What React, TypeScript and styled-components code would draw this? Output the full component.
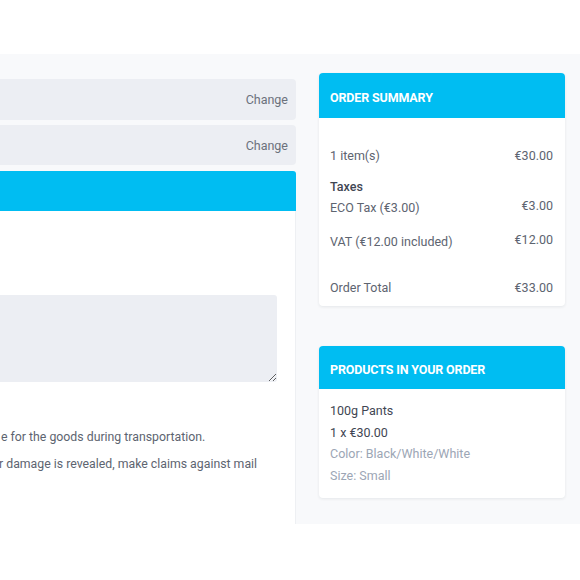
import React from "react";
import styled, { createGlobalStyle } from "styled-components";

const Global = createGlobalStyle`
  html, body { margin: 0; padding: 0; background: #ffffff; }
  body { font-family: Roboto, "Liberation Sans", Arial, sans-serif; -webkit-font-smoothing: antialiased; }
  * { box-sizing: border-box; }
`;

const BLUE = "#00bdf2";

const Page = styled.div`
  padding-top: 54px;
  background: #ffffff;
  height: 580px;
`;

const Main = styled.div`
  display: flex;
  height: 470px;
  background: #f8f9fb;
  overflow: hidden;
`;

const LeftCol = styled.div`
  width: 316px;
  margin-left: -20px;
  flex-shrink: 0;
  display: flex;
  flex-direction: column;
  padding-top: 25px;
`;

const DoneStep = styled.div<{ $h: number }>`
  height: ${(p) => p.$h}px;
  background: #eceef3;
  border-radius: 0 4px 4px 0;
  display: flex;
  align-items: center;
  justify-content: flex-end;
  padding-right: 8px;
  margin-bottom: 5px;
`;

const ChangeLink = styled.span`
  font-size: 12.5px;
  color: #6b717c;
`;

const ActiveHeader = styled.div`
  margin-top: 1px;
  height: 40px;
  background: ${BLUE};
  border-radius: 0 3px 0 0;
`;

const ActiveBody = styled.div`
  flex: 1;
  background: #ffffff;
  border-right: 1px solid #eef0f3;
  padding: 84px 18px 0 0;
`;

const Textarea = styled.textarea`
  display: block;
  width: 100%;
  height: 87px;
  border: none;
  border-radius: 3px;
  background: #eceef3;
  outline: none;
  resize: vertical;
`;

const Notes = styled.div`
  margin-top: 47px;
  display: flex;
  flex-direction: column;
  gap: 11px;
`;

const Note = styled.p<{ $indent: number }>`
  margin: 0;
  padding-left: ${(p) => p.$indent}px;
  font-size: 12.3px;
  line-height: 16px;
  color: #5d6470;
  white-space: nowrap;
`;

const RightCol = styled.div`
  flex: 1;
  padding: 19px 15px 0 23px;
  display: flex;
  flex-direction: column;
  gap: 40px;
`;

const Card = styled.div`
  background: #ffffff;
  border-radius: 4px;
  box-shadow: 0 1px 3px rgba(30, 40, 60, 0.09);
  overflow: hidden;
`;

const CardHeader = styled.div<{ $h: number }>`
  height: ${(p) => p.$h}px;
  background: ${BLUE};
  display: flex;
  align-items: center;
  padding: 4px 11px 0;
  color: #ffffff;
  font-size: 12.5px;
  font-weight: 700;
  letter-spacing: -0.15px;
  text-transform: uppercase;
`;

const SummaryBody = styled.div`
  padding: 0 12px 8px 11px;
`;

const Row = styled.div<{ $top: number; $raised?: boolean }>`
  display: flex;
  justify-content: space-between;
  align-items: flex-start;
  margin-top: ${(p) => p.$top}px;
  font-size: 12.5px;
  line-height: 20px;
  color: #5d6470;
  & > span:last-child {
    line-height: ${(p) => (p.$raised ? "16px" : "20px")};
  }
`;

const TaxTitle = styled.div`
  margin-top: 11px;
  font-size: 12.5px;
  line-height: 20px;
  font-weight: 500;
  color: #3f4653;
`;

const ProductsBody = styled.div`
  padding: 11px 11px 11px;
`;

const ProductLine = styled.div<{ $muted?: boolean }>`
  font-size: 12.5px;
  line-height: 21.7px;
  color: ${(p) => (p.$muted ? "#9ca6b5" : "#3f4653")};
`;

export default function App() {
  return (
    <Page>
      <Global />
      <Main>
        <LeftCol>
          <DoneStep $h={41}>
            <ChangeLink>Change</ChangeLink>
          </DoneStep>
          <DoneStep $h={40}>
            <ChangeLink>Change</ChangeLink>
          </DoneStep>
          <ActiveHeader />
          <ActiveBody>
            <Textarea />
            <Notes>
              <Note $indent={21}>e for the goods during transportation.</Note>
              <Note $indent={19}>r damage is revealed, make claims against mail</Note>
            </Notes>
          </ActiveBody>
        </LeftCol>
        <RightCol>
          <Card>
            <CardHeader $h={45}>Order Summary</CardHeader>
            <SummaryBody>
              <Row $top={28}>
                <span>1 item(s)</span>
                <span>€30.00</span>
              </Row>
              <TaxTitle>Taxes</TaxTitle>
              <Row $top={1} $raised>
                <span>ECO Tax (€3.00)</span>
                <span>€3.00</span>
              </Row>
              <Row $top={14} $raised>
                <span>VAT (€12.00 included)</span>
                <span>€12.00</span>
              </Row>
              <Row $top={26}>
                <span>Order Total</span>
                <span>€33.00</span>
              </Row>
            </SummaryBody>
          </Card>
          <Card>
            <CardHeader $h={43}>Products in your order</CardHeader>
            <ProductsBody>
              <ProductLine>100g Pants</ProductLine>
              <ProductLine>1 x €30.00</ProductLine>
              <ProductLine $muted>Color: Black/White/White</ProductLine>
              <ProductLine $muted>Size: Small</ProductLine>
            </ProductsBody>
          </Card>
        </RightCol>
      </Main>
    </Page>
  );
}
